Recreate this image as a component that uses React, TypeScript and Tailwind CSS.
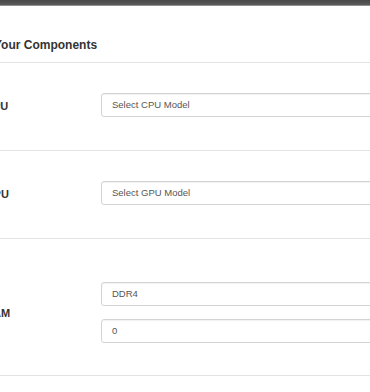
const rows = [
  { label: 'CPU', fields: ['Select CPU Model'], pad: 'pt-[30px] pb-[33px]' },
  { label: 'GPU', fields: ['Select GPU Model'], pad: 'pt-[30px] pb-[33px]' },
  { label: 'RAM', fields: ['DDR4', '0'], pad: 'pt-[43px] pb-[32px]' },
];

function Field({ value }: { value: string }) {
  return (
    <div className="h-[24px] w-[300px] flex items-center pl-[10px] border border-[#d4d4d4] rounded-[3px] shadow-[inset_0_1px_1px_rgba(0,0,0,0.06)] text-[9.5px] text-[#555]">
      {value}
    </div>
  );
}

export default function App() {
  return (
    <div className="w-[370px] h-[392px] overflow-hidden bg-white font-['Liberation_Sans',Arial,sans-serif] text-[#333]">
      <div className="h-[6px] bg-gradient-to-b from-[#484848] to-[#5a5a5a] border-b border-[#909090]" />
      <div className="pt-[32px] pb-[10px] border-b border-[#e3e3e3]">
        <h3 className="ml-[-6px] text-[12px] leading-[14px] font-bold">Your Components</h3>
      </div>
      {rows.map((row) => (
        <div key={row.label} className={`flex items-center border-b border-[#e3e3e3] ${row.pad}`}>
          <div className="ml-[-15px] w-[116px] shrink-0 text-[11px] leading-[13px] font-bold pt-[2px]">{row.label}</div>
          <div className="flex flex-col gap-[13px]">
            {row.fields.map((f) => (
              <Field key={f} value={f} />
            ))}
          </div>
        </div>
      ))}
    </div>
  );
}
